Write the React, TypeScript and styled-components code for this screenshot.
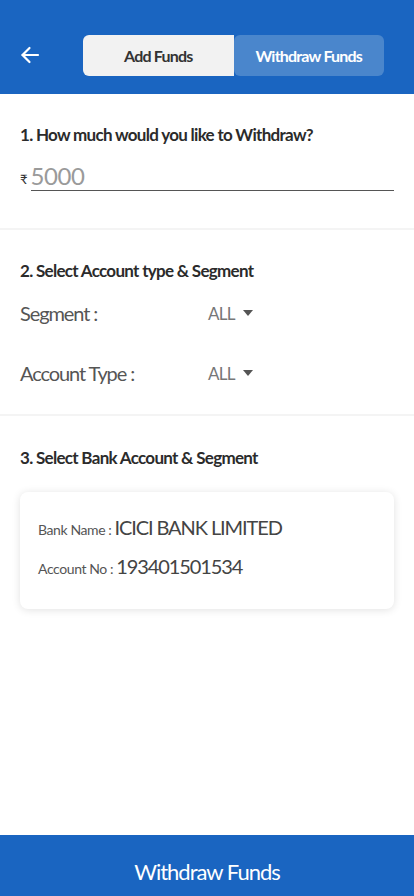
import React from 'react';
import styled, {createGlobalStyle} from "styled-components";

const GlobalStyle = createGlobalStyle`
    html, body {
        margin: 0;
        padding: 0;
        background: #ffffff;
        font-family: Lato, "Open Sans", sans-serif;
    }
    * {
        box-sizing: border-box;
    }
`;

const Page = styled.div`
    display: flex;
    flex-direction: column;
    width: 414px;
    height: 896px;
    background: #fff;
`;

const Header = styled.header`
    display: flex;
    align-items: center;
    height: 94px;
    padding: 16px 30px 0 20px;
    background: #1a65c1;
`;

const BackButton = styled.button`
    display: flex;
    align-items: center;
    justify-content: center;
    width: 20px;
    height: 20px;
    padding: 0;
    margin-right: 43px;
    border: none;
    background: none;
    color: #fff;
`;

const Toggle = styled.div`
    display: flex;
    flex: 1;
    height: 41px;
    border-radius: 6px;
    overflow: hidden;
`;

const ToggleItem = styled.div<{ $active?: boolean }>`
    display: flex;
    align-items: center;
    justify-content: center;
    flex: 1;
    font-size: 16px;
    font-weight: 700;
    letter-spacing: -0.8px;
    color: ${p => p.$active ? "#ffffff" : "#333333"};
    background: ${p => p.$active ? "#4a86cc" : "#f2f2f2"};
    border-radius: ${p => p.$active ? "6px 0 0 6px" : "0"};
`;

const Section = styled.section<{ $height?: number }>`
    display: flex;
    flex-direction: column;
    padding: 0 20px;
    height: ${p => p.$height ? `${p.$height}px` : "auto"};
    border-bottom: ${p => p.$height ? "2px solid #f4f4f4" : "none"};
`;

const Title = styled.h2<{ $top: number }>`
    margin: ${p => p.$top}px 0 0;
    font-size: 17px;
    font-weight: 700;
    letter-spacing: -0.7px;
    color: #2b2b2b;
`;

const AmountRow = styled.div`
    display: flex;
    align-items: flex-end;
    margin-top: 17px;
`;

const Rupee = styled.span`
    font-size: 13px;
    color: #333;
    margin-right: 3px;
    padding-bottom: 4px;
`;

const AmountInput = styled.div`
    flex: 1;
    font-size: 24px;
    line-height: 28px;
    color: #9a9a9a;
    border-bottom: 1px solid #555;
    letter-spacing: -0.4px;
`;

const FieldRow = styled.div<{ $top: number }>`
    display: flex;
    align-items: center;
    margin-top: ${p => p.$top}px;
`;

const FieldLabel = styled.span`
    width: 188px;
    font-size: 20px;
    color: #555;
    letter-spacing: -1.1px;
`;

const FieldValue = styled.span`
    display: flex;
    align-items: center;
    gap: 8px;
    font-size: 17px;
    color: #777;
    letter-spacing: -0.8px;
`;

const Caret = styled.span`
    width: 0;
    height: 0;
    border-left: 5px solid transparent;
    border-right: 5px solid transparent;
    border-top: 6px solid #555;
`;

const Card = styled.div`
    display: flex;
    flex-direction: column;
    gap: 15px;
    margin-top: 24px;
    padding: 23px 18px 31px;
    border-radius: 8px;
    background: #fff;
    box-shadow: 0 1px 8px rgba(0, 0, 0, 0.12);
`;

const CardRow = styled.div`
    display: flex;
    align-items: baseline;
    gap: 3px;
`;

const CardLabel = styled.span`
    font-size: 14px;
    color: #555;
    letter-spacing: -0.4px;
`;

const CardValue = styled.span`
    font-size: 20px;
    color: #444;
    letter-spacing: -1.1px;
`;

const Spacer = styled.div`
    flex: 1;
`;

const SubmitButton = styled.button`
    height: 61px;
    padding: 12px 0 0;
    border: none;
    background: #1a65c1;
    color: #fff;
    font-family: Lato, "Open Sans", sans-serif;
    font-size: 22px;
    letter-spacing: -1px;
`;

const App: React.FC = () => {
    return (
        <Page>
            <GlobalStyle/>
            <Header>
                <BackButton aria-label="Back">
                    <svg width="20" height="20" viewBox="0 0 20 20" fill="none" stroke="currentColor"
                         strokeWidth="2.2" strokeLinecap="round" strokeLinejoin="round">
                        <path d="M18 10H2.5"/>
                        <path d="M9.5 3L2.5 10L9.5 17"/>
                    </svg>
                </BackButton>
                <Toggle>
                    <ToggleItem>Add Funds</ToggleItem>
                    <ToggleItem $active>Withdraw Funds</ToggleItem>
                </Toggle>
            </Header>

            <Section $height={136}>
                <Title $top={30}>1. How much would you like to Withdraw?</Title>
                <AmountRow>
                    <Rupee>₹</Rupee>
                    <AmountInput>5000</AmountInput>
                </AmountRow>
            </Section>

            <Section $height={186}>
                <Title $top={30}>2. Select Account type &amp; Segment</Title>
                <FieldRow $top={20}>
                    <FieldLabel>Segment :</FieldLabel>
                    <FieldValue>ALL <Caret/></FieldValue>
                </FieldRow>
                <FieldRow $top={36}>
                    <FieldLabel>Account Type :</FieldLabel>
                    <FieldValue>ALL <Caret/></FieldValue>
                </FieldRow>
            </Section>

            <Section>
                <Title $top={31}>3. Select Bank Account &amp; Segment</Title>
                <Card>
                    <CardRow>
                        <CardLabel>Bank Name :</CardLabel>
                        <CardValue>ICICI BANK LIMITED</CardValue>
                    </CardRow>
                    <CardRow>
                        <CardLabel>Account No :</CardLabel>
                        <CardValue>193401501534</CardValue>
                    </CardRow>
                </Card>
            </Section>

            <Spacer/>
            <SubmitButton>Withdraw Funds</SubmitButton>
        </Page>
    );
};

export default App;
